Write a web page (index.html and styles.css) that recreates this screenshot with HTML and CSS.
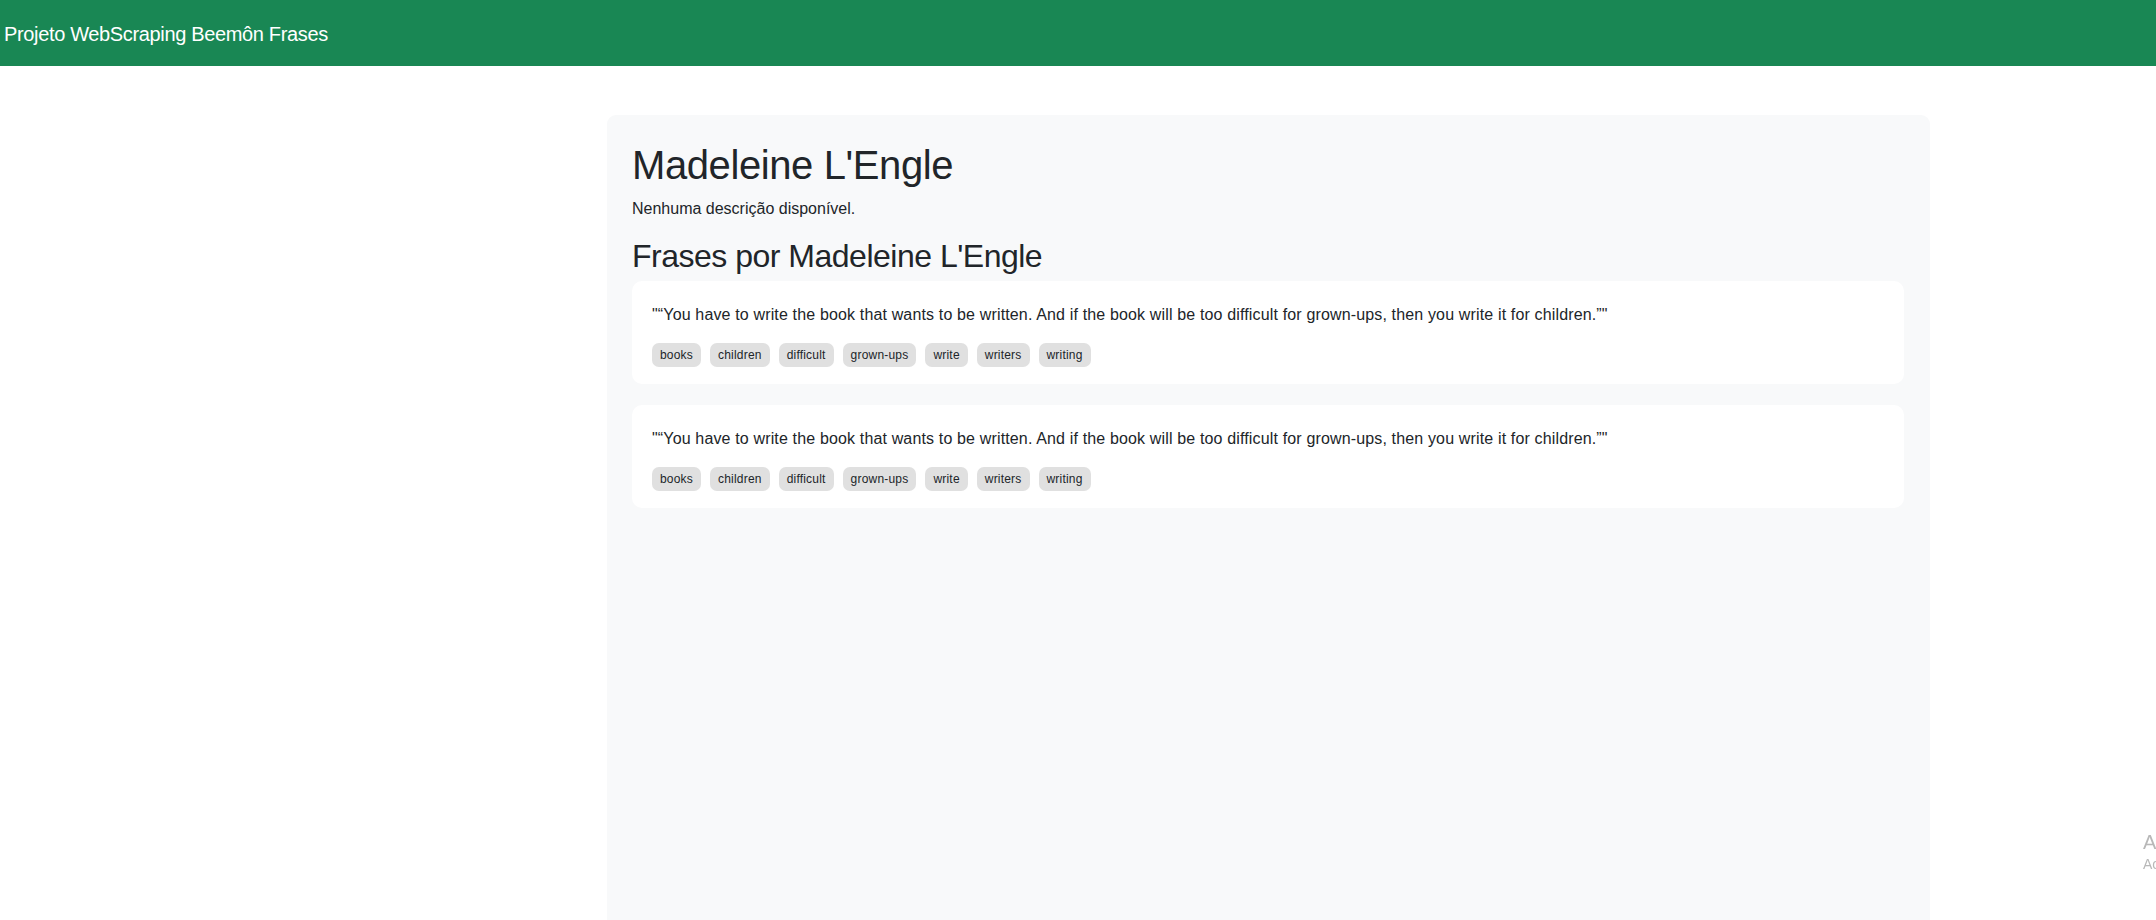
FILE: index.html
```html
<!DOCTYPE html>
<html lang="pt-BR">
<head>
<meta charset="utf-8">
<title>Projeto WebScraping Beemôn Frases</title>
<link rel="stylesheet" href="styles.css">
</head>
<body>
<nav class="navbar">
  <span class="brand">Projeto WebScraping Beemôn Frases</span>
</nav>
<main class="author-box">
  <h1 class="author-name">Madeleine L'Engle</h1>
  <p class="author-desc">Nenhuma descrição disponível.</p>
  <h2 class="quotes-title">Frases por Madeleine L'Engle</h2>
  <div class="quote-card">
    <p class="quote-text">"“You have to write the book that wants to be written. And if the book will be too difficult for grown-ups, then you write it for children.”"</p>
    <div class="tags">
      <span class="tag">books</span><span class="tag">children</span><span class="tag">difficult</span><span class="tag">grown-ups</span><span class="tag">write</span><span class="tag">writers</span><span class="tag">writing</span>
    </div>
  </div>
  <div class="quote-card">
    <p class="quote-text">"“You have to write the book that wants to be written. And if the book will be too difficult for grown-ups, then you write it for children.”"</p>
    <div class="tags">
      <span class="tag">books</span><span class="tag">children</span><span class="tag">difficult</span><span class="tag">grown-ups</span><span class="tag">write</span><span class="tag">writers</span><span class="tag">writing</span>
    </div>
  </div>
</main>
<div class="activation">
  <div class="act-title">Ativar o Windows</div>
  <div class="act-sub">Acesse Configurações para ativar o Windows.</div>
</div>
</body>
</html>
```
FILE: styles.css
```css
html, body {
  margin: 0;
  padding: 0;
  overflow: hidden;
  height: 100%;
}
body {
  font-family: "Segoe UI", "Liberation Sans", Arial, sans-serif;
  color: #212529;
  background: #fff;
}
.navbar {
  background: #198754;
  height: 66px;
  display: flex;
  align-items: center;
  padding-left: 4px;
}
.brand {
  color: #fff;
  font-size: 20px;
  line-height: 30px;
  letter-spacing: -0.35px;
  padding-top: 2px;
}
.author-box {
  margin: 49px 0 0 607px;
  width: 1323px;
  box-sizing: border-box;
  background: #f8f9fa;
  border-radius: 9px;
  padding: 26px 26px 20px 25px;
  min-height: calc(100vh - 95px);
}
.author-name {
  margin: 0;
  font-size: 40px;
  font-weight: 400;
  line-height: 48px;
  letter-spacing: -0.4px;
}
.author-desc {
  margin: 8px 0 0;
  font-size: 16px;
  line-height: 24px;
}
.quotes-title {
  margin: 16px 0 0;
  font-size: 32px;
  font-weight: 400;
  line-height: 38px;
  letter-spacing: -0.5px;
}
.quote-card {
  background: #fff;
  border-radius: 10px;
  padding: 22px 20px 17px;
  margin-top: 6px;
  margin-bottom: 21px;
}
.quote-text {
  margin: 0 0 16px;
  font-size: 16px;
  line-height: 24px;
  letter-spacing: 0.15px;
}
.tags {
  display: flex;
  gap: 9px;
}
.tag {
  background: #e0e0e0;
  border-radius: 7px;
  font-size: 12px;
  line-height: 24px;
  height: 24px;
  padding: 0 8px;
  letter-spacing: 0.2px;
}
.activation {
  position: fixed;
  right: 0;
  top: 830px;
  width: 13px;
  overflow: hidden;
  white-space: nowrap;
  color: #b8b8b8;
}
.act-title {
  font-size: 20px;
  line-height: 24px;
}
.act-sub {
  font-size: 14px;
  line-height: 20px;
}
```
